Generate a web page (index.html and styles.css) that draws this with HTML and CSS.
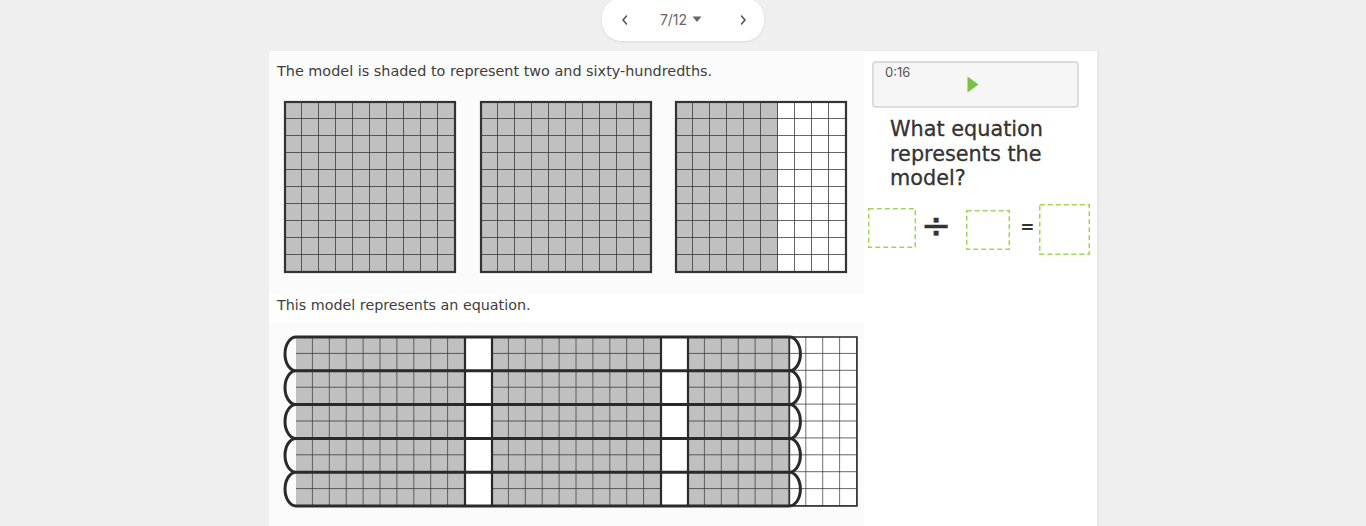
FILE: index.html
```html
<!DOCTYPE html>
<html>
<head>
<meta charset="utf-8">
<link rel="stylesheet" href="styles.css">
</head>
<body>
<div class="topbar">
  <nav class="pager">
    <span class="chev"><svg width="10" height="12" viewBox="0 0 10 12"><path d="M6.5 2 L3 6 L6.5 10" fill="none" stroke="#555" stroke-width="1.6" stroke-linecap="round" stroke-linejoin="round"/></svg></span>
    <span class="count">7/12 <svg class="caret" width="10" height="7" viewBox="0 0 10 7"><path d="M0.5 0.5 H9.5 L5 6 Z" fill="#666"/></svg></span>
    <span class="chev"><svg width="10" height="12" viewBox="0 0 10 12"><path d="M3.5 2 L7 6 L3.5 10" fill="none" stroke="#555" stroke-width="1.6" stroke-linecap="round" stroke-linejoin="round"/></svg></span>
  </nav>
</div>
<main class="card">
  <section class="left">
    <div class="figure figure-top">
      <p class="caption">The model is shaded to represent two and sixty-hundredths.</p>
      <svg class="grids" width="595" height="214" viewBox="269 81 595 214">
        <defs>
          <pattern id="cell" width="17" height="17" patternUnits="userSpaceOnUse">
            <path d="M17 0 V17 H0" fill="none" stroke="#333" stroke-width="1.5"/>
          </pattern>
          <pattern id="cellb" width="16.9" height="16.9" patternUnits="userSpaceOnUse">
            <path d="M16.9 0 V16.9 H0" fill="none" stroke="#333" stroke-width="1.4"/>
          </pattern>
        </defs>
        <g transform="translate(285 102)">
          <rect width="170" height="170" fill="#c0c0c0"/>
          <rect width="170" height="170" fill="url(#cell)"/>
          <rect width="170" height="170" fill="none" stroke="#333" stroke-width="2.2"/>
        </g>
        <g transform="translate(481 102)">
          <rect width="170" height="170" fill="#c0c0c0"/>
          <rect width="170" height="170" fill="url(#cell)"/>
          <rect width="170" height="170" fill="none" stroke="#333" stroke-width="2.2"/>
        </g>
        <g transform="translate(676 102)">
          <rect width="170" height="170" fill="#fff"/>
          <rect width="102" height="170" fill="#c0c0c0"/>
          <rect width="170" height="170" fill="url(#cell)"/>
          <rect width="170" height="170" fill="none" stroke="#333" stroke-width="2.2"/>
        </g>
      </svg>
    </div>
    <p class="caption caption-2">This model represents an equation.</p>
    <div class="figure figure-bottom">
      <svg class="model" width="595" height="211" viewBox="269 322 595 211">
        <rect x="296" y="337" width="169" height="169" fill="#c0c0c0"/>
        <rect x="465" y="337" width="27" height="169" fill="#fff"/>
        <rect x="492" y="337" width="169" height="169" fill="#c0c0c0"/>
        <rect x="661" y="337" width="27" height="169" fill="#fff"/>
        <rect x="688" y="337" width="101.4" height="169" fill="#c0c0c0"/>
        <rect x="789.4" y="337" width="67.6" height="169" fill="#fff"/>
        <g transform="translate(296 337)"><rect width="169" height="169" fill="url(#cellb)"/></g>
        <g transform="translate(492 337)"><rect width="169" height="169" fill="url(#cellb)"/></g>
        <g transform="translate(688 337)"><rect width="169" height="169" fill="url(#cellb)"/></g>
        <rect x="789.4" y="337" width="67.6" height="169" fill="none" stroke="#333" stroke-width="1.6"/>
        <g stroke="#2a2a2a" stroke-width="3" fill="none">
          <path d="M296 337 H789.4 M296 370.8 H789.4 M296 404.6 H789.4 M296 438.4 H789.4 M296 472.2 H789.4 M296 506 H789.4"/>
          <path d="M465 337 V506 M492 337 V506 M661 337 V506 M688 337 V506" stroke-width="2.2"/>
          <path d="M296 337 A11 16.9 0 0 0 296 370.8 A11 16.9 0 0 0 296 404.6 A11 16.9 0 0 0 296 438.4 A11 16.9 0 0 0 296 472.2 A11 16.9 0 0 0 296 506"/>
          <path d="M789.4 337 A11 16.9 0 0 1 789.4 370.8 A11 16.9 0 0 1 789.4 404.6 A11 16.9 0 0 1 789.4 438.4 A11 16.9 0 0 1 789.4 472.2 A11 16.9 0 0 1 789.4 506"/>
        </g>
      </svg>
    </div>
  </section>
  <aside class="right">
    <div class="player">
      <span class="time">0:16</span>
      <svg class="play" width="12" height="17" viewBox="0 0 12 17"><path d="M0.5 0.5 L11.5 8.5 L0.5 16.5 Z" fill="#7cc242"/></svg>
    </div>
    <h2 class="question">What equation represents the model?</h2>
    <div class="equation">
      <svg class="slot slot-1" width="48" height="40" viewBox="0 0 48 40"><rect x="0.75" y="0.75" width="46.5" height="38.5" fill="none" stroke="#a3d45a" stroke-width="1.5" stroke-dasharray="5 3"/></svg>
      <span class="op divide">÷</span>
      <svg class="slot slot-2" width="44" height="40" viewBox="0 0 44 40"><rect x="0.75" y="0.75" width="42.5" height="38.5" fill="none" stroke="#a3d45a" stroke-width="1.5" stroke-dasharray="5 3"/></svg>
      <span class="op equals">=</span>
      <svg class="slot slot-3" width="51" height="51" viewBox="0 0 51 51"><rect x="0.75" y="0.75" width="49.5" height="49.5" fill="none" stroke="#a3d45a" stroke-width="1.5" stroke-dasharray="5 3"/></svg>
    </div>
  </aside>
</main>
</body>
</html>
```
FILE: styles.css
```css
* { box-sizing: border-box; }
html, body { margin: 0; padding: 0; }
body {
  background: #efefef;
  font-family: "DejaVu Sans", Verdana, sans-serif;
  height: 526px;
  overflow: hidden;
}
.topbar {
  display: flex;
  justify-content: center;
  height: 41px;
}
.pager {
  width: 162px;
  height: 43px;
  margin-top: -2px;
  background: #fff;
  border-radius: 20px;
  box-shadow: 0 1px 3px rgba(0,0,0,0.08);
  display: flex;
  align-items: center;
  justify-content: space-between;
  padding: 0 16px 0 18px;
}
.chev { display: flex; align-items: center; }
.count {
  font-family: "Inter", "DejaVu Sans", sans-serif;
  font-size: 14px;
  color: #666;
  display: flex;
  align-items: center;
  gap: 5px;
  margin-right: 6px;
}
.card {
  width: 828px;
  margin: 10px auto 0;
  background: #fff;
  display: flex;
  height: 500px;
  box-shadow: 2px 0 2px rgba(0,0,0,0.04);
}
.left { width: 595px; }
.figure-top { background: #fbfbfb; }
.caption {
  margin: 0;
  padding: 10px 0 0 8px;
  font-size: 14.4px;
  line-height: 20px;
  color: #3d3d3d;
}
.caption-2 { padding-top: 0; height: 27px; font-size: 14.3px; }
.grids, .model { display: block; }
.figure-bottom { background: #fbfbfb; }
.right {
  flex: 1;
  padding: 10px 0 0 8px;
}
.player {
  width: 207px;
  height: 47px;
  border: 2px solid #dcdcdc;
  border-radius: 4px;
  background: #f6f6f6;
  position: relative;
  display: flex;
  justify-content: center;
  align-items: center;
}
.time {
  position: absolute;
  left: 11px;
  top: 1px;
  font-family: "Inter", "DejaVu Sans", sans-serif;
  font-size: 13px;
  color: #555;
}
.play { margin-left: -6px; margin-top: -1px; }
.question {
  margin: 9px 0 0 18px;
  font-family: "DejaVu Sans", sans-serif;
  font-weight: normal;
  -webkit-text-stroke: 0.3px #333;
  font-size: 20.8px;
  line-height: 24.5px;
  color: #333;
  width: 190px;
}
.equation {
  display: flex;
  align-items: flex-start;
  margin: 13px 0 0 -4px;
}
.slot { display: block; }
.slot-1 { margin-top: 4px; }
.slot-2 { margin-top: 6px; }
.slot-3 { margin-top: 0; }
.op { font-family: "DejaVu Sans", sans-serif; color: #333; line-height: 1; }
.divide { font-size: 36px; margin: 4px 15px 0 5px; -webkit-text-stroke: 0.6px #333; }
.equals { font-size: 17px; font-weight: bold; margin: 15px 5px 0 10px; }
```
